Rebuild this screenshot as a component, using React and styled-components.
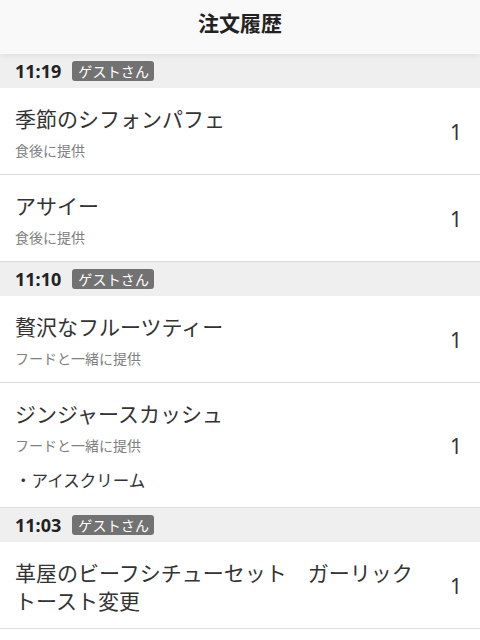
import React from 'react'
import styled, { createGlobalStyle } from 'styled-components'

const orders = [
  {
    time: '11:19',
    guest: 'ゲストさん',
    items: [
      { name: '季節のシフォンパフェ', note: '食後に提供', qty: 1 },
      { name: 'アサイー', note: '食後に提供', qty: 1 }
    ]
  },
  {
    time: '11:10',
    guest: 'ゲストさん',
    items: [
      { name: '贅沢なフルーツティー', note: 'フードと一緒に提供', qty: 1 },
      {
        name: 'ジンジャースカッシュ',
        note: 'フードと一緒に提供',
        options: ['・アイスクリーム'],
        qty: 1
      }
    ]
  },
  {
    time: '11:03',
    guest: 'ゲストさん',
    items: [{ name: '革屋のビーフシチューセット　ガーリックトースト変更', qty: 1 }]
  }
]

const App = () => (
  <Page>
    <GlobalStyle />
    <Header>注文履歴</Header>
    {orders.map(order => (
      <section key={order.time}>
        <GroupHead>
          <Time>{order.time}</Time>
          <Badge>{order.guest}</Badge>
        </GroupHead>
        {order.items.map(item => (
          <Row key={item.name}>
            <Info>
              <Name>{item.name}</Name>
              {item.note && <Note>{item.note}</Note>}
              {item.options &&
                item.options.map(opt => <Option key={opt}>{opt}</Option>)}
            </Info>
            <Qty>{item.qty}</Qty>
          </Row>
        ))}
      </section>
    ))}
  </Page>
)
export default App

const GlobalStyle = createGlobalStyle`
  body {
    margin: 0;
    background: #fff;
    font-family: "Noto Sans CJK JP", "Noto Sans", sans-serif;
    color: #333;
  }
`

const Page = styled.div`
  width: 480px;
  min-height: 640px;
  background: #fff;
  overflow: hidden;
`

const Header = styled.header`
  position: relative;
  z-index: 1;
  height: 54px;
  display: flex;
  align-items: center;
  justify-content: center;
  padding-bottom: 10px;
  box-sizing: border-box;
  background: #f9f9f9;
  font-size: 21px;
  font-weight: 700;
  color: #222;
  box-shadow: 0 1px 6px rgba(0, 0, 0, 0.08);
`

const GroupHead = styled.div`
  height: 34px;
  display: flex;
  align-items: center;
  gap: 11px;
  padding: 0 15px;
  background: #efefef;
  box-sizing: border-box;
`

const Time = styled.span`
  font-family: "Noto Sans", sans-serif;
  font-size: 18px;
  font-weight: 700;
  color: #222;
`

const Badge = styled.span`
  height: 20px;
  line-height: 20px;
  padding: 0 5px 0 6px;
  border-radius: 3px;
  background: #727272;
  color: #fff;
  font-size: 14px;
  letter-spacing: 0.2px;
`

const Row = styled.div`
  display: flex;
  align-items: center;
  padding: 16px 0 14px 15px;
  border-bottom: 1px solid #dcdcdc;
  background: #fff;
`

const Info = styled.div`
  flex: 1;
  display: flex;
  flex-direction: column;
`

const Name = styled.div`
  font-size: 21px;
  line-height: 28px;
  color: #333;
`

const Note = styled.div`
  margin-top: 8px;
  font-size: 14px;
  line-height: 20px;
  color: #808080;
`

const Option = styled.div`
  margin-top: 12px;
  font-size: 16.5px;
  line-height: 26px;
  color: #333;
`

const Qty = styled.div`
  width: 55px;
  padding-right: 18px;
  box-sizing: border-box;
  text-align: right;
  font-family: "Noto Sans", sans-serif;
  font-size: 21px;
  color: #333;
`
